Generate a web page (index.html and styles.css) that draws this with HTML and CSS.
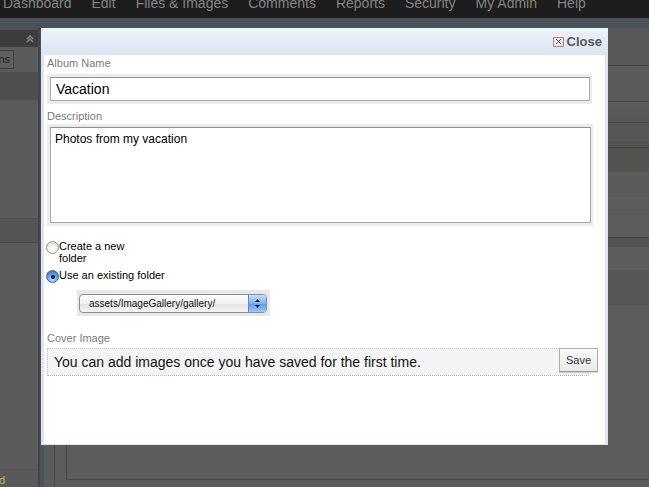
FILE: index.html
```html
<!DOCTYPE html>
<html>
<head>
<meta charset="utf-8">
<title>Album</title>
<link rel="stylesheet" href="styles.css">
</head>
<body>
<div class="page">
  <nav class="topnav">
    <ul class="menu">
      <li>Dashboard</li>
      <li>Edit</li>
      <li>Files &amp; Images</li>
      <li>Comments</li>
      <li>Reports</li>
      <li>Security</li>
      <li>My Admin</li>
      <li>Help</li>
    </ul>
  </nav>
  <div class="subbar"></div>
  <div class="workspace">
    <aside class="leftpanel">
      <div class="lp-head">
        <svg class="lp-chev" width="8" height="8" viewBox="0 0 8 8"><path d="M1 4 L4 1 L7 4 M1 7 L4 4 L7 7" fill="none" stroke="#8a8a8a" stroke-width="1.3"/></svg>
      </div>
      <div class="lp-tools"><span class="lp-btn">ns</span></div>
      <div class="lp-row lp-dark"></div>
      <div class="lp-row lp-fill-a"></div>
      <div class="lp-row lp-band"></div>
      <div class="lp-row lp-fill-b"></div>
      <div class="lp-foot"><span class="lp-status">d</span></div>
    </aside>
    <div class="divider"></div>
    <main class="content">
      <div class="row r1"></div>
      <div class="row r2"></div>
      <div class="row r3"></div>
      <div class="row r4"></div>
      <div class="row r5"></div>
      <div class="row r6"></div>
      <div class="row r7"></div>
      <div class="row r8"></div>
      <div class="row r9"></div>
      <div class="row r10"></div>
      <div class="row r11"></div>
      <div class="row r12"></div>
      <div class="edit-box"><div class="edit-inner"></div></div>
    </main>
  </div>

  <div class="modal">
    <div class="modal-head">
      <span class="close-icon"><svg width="7" height="7" viewBox="0 0 7 7"><path d="M1 1 L6 6 M6 1 L1 6" stroke="#6a5a5a" stroke-width="1"/></svg></span>
      <span class="close-text">Close</span>
    </div>
    <div class="modal-body">
      <div class="field-label lbl-album">Album Name</div>
      <div class="frame frame-input"><div class="text-input">Vacation</div></div>
      <div class="field-label lbl-desc">Description</div>
      <div class="frame frame-area"><div class="text-area">Photos from my vacation</div></div>

      <div class="option opt-new">
        <span class="radio"></span>
        <span class="opt-text">Create a new<br>folder</span>
      </div>
      <div class="option opt-existing">
        <span class="radio radio-on"><span class="radio-dot"></span></span>
        <span class="opt-text">Use an existing folder</span>
      </div>
      <div class="frame frame-select">
        <div class="select">
          <span class="select-value">assets/ImageGallery/gallery/</span>
          <span class="stepper">
            <svg width="7" height="11" viewBox="0 0 7 11"><path d="M3.5 1 L6 4 L1 4 Z M3.5 10 L6 7 L1 7 Z" fill="#1b2a44"/></svg>
          </span>
        </div>
      </div>

      <div class="field-label lbl-cover">Cover Image</div>
      <div class="cover-row">
        <div class="cover-box">You can add images once you have saved for the first time.</div>
        <span class="save-btn">Save</span>
      </div>
    </div>
  </div>
</div>
</body>
</html>
```

FILE: styles.css
```css
html, body {
  margin: 0;
  padding: 0;
}
body {
  background: #5b5b5b;
  font-family: "Liberation Sans", Arial, Helvetica, sans-serif;
}
.page {
  position: relative;
  width: 649px;
  height: 487px;
  overflow: hidden;
  display: flex;
  flex-direction: column;
}

/* top navigation */
.topnav {
  height: 18px;
  flex: none;
  background: #1d1d1d;
  overflow: hidden;
}
.menu {
  list-style: none;
  margin: -6px 0 0 0;
  padding: 0 0 0 3px;
  display: flex;
  gap: 20px;
  font-size: 14px;
  line-height: 18px;
  color: #848484;
  white-space: nowrap;
}
.subbar {
  height: 10px;
  flex: none;
  background: #4b5159;
}

/* workspace */
.workspace {
  flex: 1;
  display: flex;
  min-height: 0;
}
.leftpanel {
  width: 38px;
  flex: none;
  display: flex;
  flex-direction: column;
  background: #5b5b5b;
}
.lp-head {
  height: 17px;
  border-top: 2px solid #4b5159;
  background: #3d3d3d;
  display: flex;
  justify-content: flex-end;
  align-items: center;
  padding-right: 4px;
}
.lp-tools {
  height: 25px;
  background: #5b5b5b;
  display: flex;
  align-items: center;
}
.lp-btn {
  margin-left: -6px;
  width: 20px;
  height: 19px;
  box-sizing: border-box;
  border: 1px solid #3e3e3e;
  background: #5f5f5f;
  color: #1e1e1e;
  font-size: 11px;
  line-height: 17px;
  text-align: right;
  padding-right: 3px;
}
.lp-dark { height: 28px; background: #4f4f4f; }
.lp-fill-a { height: 118px; background: #5b5b5b; }
.lp-band { height: 23px; background: #545454; border-top: 1px solid #4d4d4d; border-bottom: 1px solid #4d4d4d; }
.lp-fill-b { flex: 1; background: #5b5b5b; }
.lp-foot {
  height: 14px;
  border-top: 1px solid #545454;
  background: #595959;
  font-size: 11px;
  line-height: 14px;
  padding-top: 3px;
  overflow: hidden;
}
.lp-status {
  color: #b9b35a;
  margin-left: -1px;
}
.divider {
  width: 4px;
  flex: none;
  background: #4c535b;
  border-left: 2px solid #41464c;
}

.content {
  flex: 1;
  display: flex;
  flex-direction: column;
  background: #5c5c5c;
}
.row { flex: none; }
.r1 { height: 37px; background: #585858; border-bottom: 1px solid #454545; }
.r2 { height: 35px; background: #5b5b5b; border-bottom: 1px solid #474747; }
.r3 { height: 20px; background: linear-gradient(#5d5d5d, #575757); border-bottom: 1px solid #474747; }
.r4 { height: 19px; background: #565656; border-bottom: 1px solid #505050; }
.r5 { height: 4px; background: #545454; border-bottom: 1px solid #444444; }
.r6 { height: 24px; background: #53524f; }
.r7 { height: 20px; background: #5b5b5b; border-bottom: 1px solid #575757; }
.r8 { height: 20px; background: #5c5c5c; border-bottom: 1px solid #575757; }
.r9 { height: 23px; background: #5c5c5c; border-bottom: 1px solid #434343; }
.r10 { height: 9px; background: #545454; }
.r11 { height: 23px; background: #5d5d5d; }
.r12 { height: 35px; background: #565656; }
.edit-box {
  flex: 1;
  margin-left: 10px;
  border-left: 1px solid #474747;
  display: flex;
  flex-direction: column;
}
.edit-inner {
  flex: 1;
  margin: 0 0 7px 11px;
  border-left: 1px solid #454545;
  border-bottom: 1px solid #454545;
}

/* modal */
.modal {
  position: absolute;
  left: 41px;
  top: 28px;
  width: 567px;
  height: 417px;
  background: #dce5f1;
  display: flex;
  flex-direction: column;
}
.modal-head {
  height: 27px;
  flex: none;
  background: linear-gradient(#eef3fa, #dbe4f1);
  display: flex;
  justify-content: flex-end;
  align-items: center;
  padding-right: 6px;
  gap: 3px;
}
.close-icon {
  width: 11px;
  height: 10px;
  box-sizing: border-box;
  border: 1px solid #a09090;
  background: #f6e2e2;
  display: flex;
  align-items: center;
  justify-content: center;
}
.close-text {
  font-size: 13px;
  font-weight: bold;
  color: #575757;
  line-height: 16px;
}
.modal-body {
  flex: 1;
  margin: 0 3px 1px 3px;
  background: #ffffff;
  padding: 0 13px 0 3px;
  display: flex;
  flex-direction: column;
  align-items: flex-start;
}
.field-label {
  font-size: 11px;
  line-height: 14px;
  color: #7a7a7a;
}
.lbl-album { margin-top: 1px; margin-bottom: 4px; }
.lbl-desc { margin-top: 5px; margin-bottom: 1px; }
.lbl-cover { margin-top: 15px; margin-bottom: 3px; }

.frame {
  background: #ececec;
  box-sizing: border-box;
}
.frame-input {
  width: 545px;
  height: 30px;
  padding: 3px 2px 3px 3px;
}
.text-input {
  height: 24px;
  box-sizing: border-box;
  border: 1px solid #a9a9a9;
  border-top-color: #8e8e8e;
  background: #fff;
  font-size: 14px;
  line-height: 22px;
  padding-left: 5px;
  color: #000;
}
.frame-area {
  width: 546px;
  height: 102px;
  padding: 3px 2px 3px 3px;
}
.text-area {
  height: 96px;
  box-sizing: border-box;
  border: 1px solid #a9a9a9;
  border-top-color: #8e8e8e;
  background: #fff;
  font-size: 12px;
  line-height: 15px;
  padding: 4px 4px;
  color: #000;
}

.option {
  display: flex;
  align-items: flex-start;
  font-size: 11px;
  line-height: 12px;
  color: #000;
  margin-left: -1px;
}
.opt-new { margin-top: 14px; }
.opt-existing { margin-top: 5px; }
.opt-text { margin-left: 0; }
.radio {
  width: 13px;
  height: 13px;
  box-sizing: border-box;
  border-radius: 50%;
  border: 1px solid #8f8f8f;
  background: radial-gradient(circle at 50% 75%, #ffffff 0%, #f3f3f3 40%, #d6d6d6 100%);
  margin-top: 1px;
  flex: none;
  display: flex;
  align-items: center;
  justify-content: center;
}
.radio-on {
  border-color: #45628f;
  background: radial-gradient(circle at 50% 80%, #b8dcff 0%, #6fa4ea 45%, #2d64c2 100%);
}
.radio-dot {
  width: 4px;
  height: 4px;
  border-radius: 50%;
  background: #0f1b33;
}

.frame-select {
  margin: 7px 0 0 30px;
  width: 193px;
  height: 26px;
  padding: 4px 3px 3px 2px;
  background: #e8e8e8;
}
.select {
  height: 19px;
  box-sizing: border-box;
  border: 1px solid #8d8d8d;
  border-radius: 4px;
  background: linear-gradient(#ffffff, #f0f0f0 50%, #e2e2e2 51%, #f4f4f4);
  display: flex;
  align-items: center;
  justify-content: space-between;
  overflow: hidden;
}
.select-value {
  font-size: 10px;
  color: #111;
  padding-left: 9px;
  line-height: 17px;
}
.stepper {
  width: 17px;
  height: 17px;
  border-left: 1px solid #6d86ad;
  background: linear-gradient(#c9defa, #7fb0ef 50%, #5b95e6 51%, #9fcbff);
  display: flex;
  align-items: center;
  justify-content: center;
}

.cover-row {
  display: flex;
  align-items: flex-start;
}
.cover-box {
  width: 542px;
  height: 28px;
  box-sizing: border-box;
  border: 1px dotted #c4c4c4;
  background: #f4f4f4;
  font-size: 14px;
  line-height: 26px;
  padding-left: 6px;
  color: #111;
}
.save-btn {
  margin-left: -30px;
  width: 39px;
  height: 24px;
  box-sizing: border-box;
  border: 1px solid #b0b0b0;
  border-bottom-color: #9a9a9a;
  background: linear-gradient(#fafafa, #e9e9e9);
  box-shadow: 0 1px 1px rgba(0,0,0,0.15);
  font-size: 11px;
  line-height: 22px;
  text-align: center;
  color: #333;
}
```
